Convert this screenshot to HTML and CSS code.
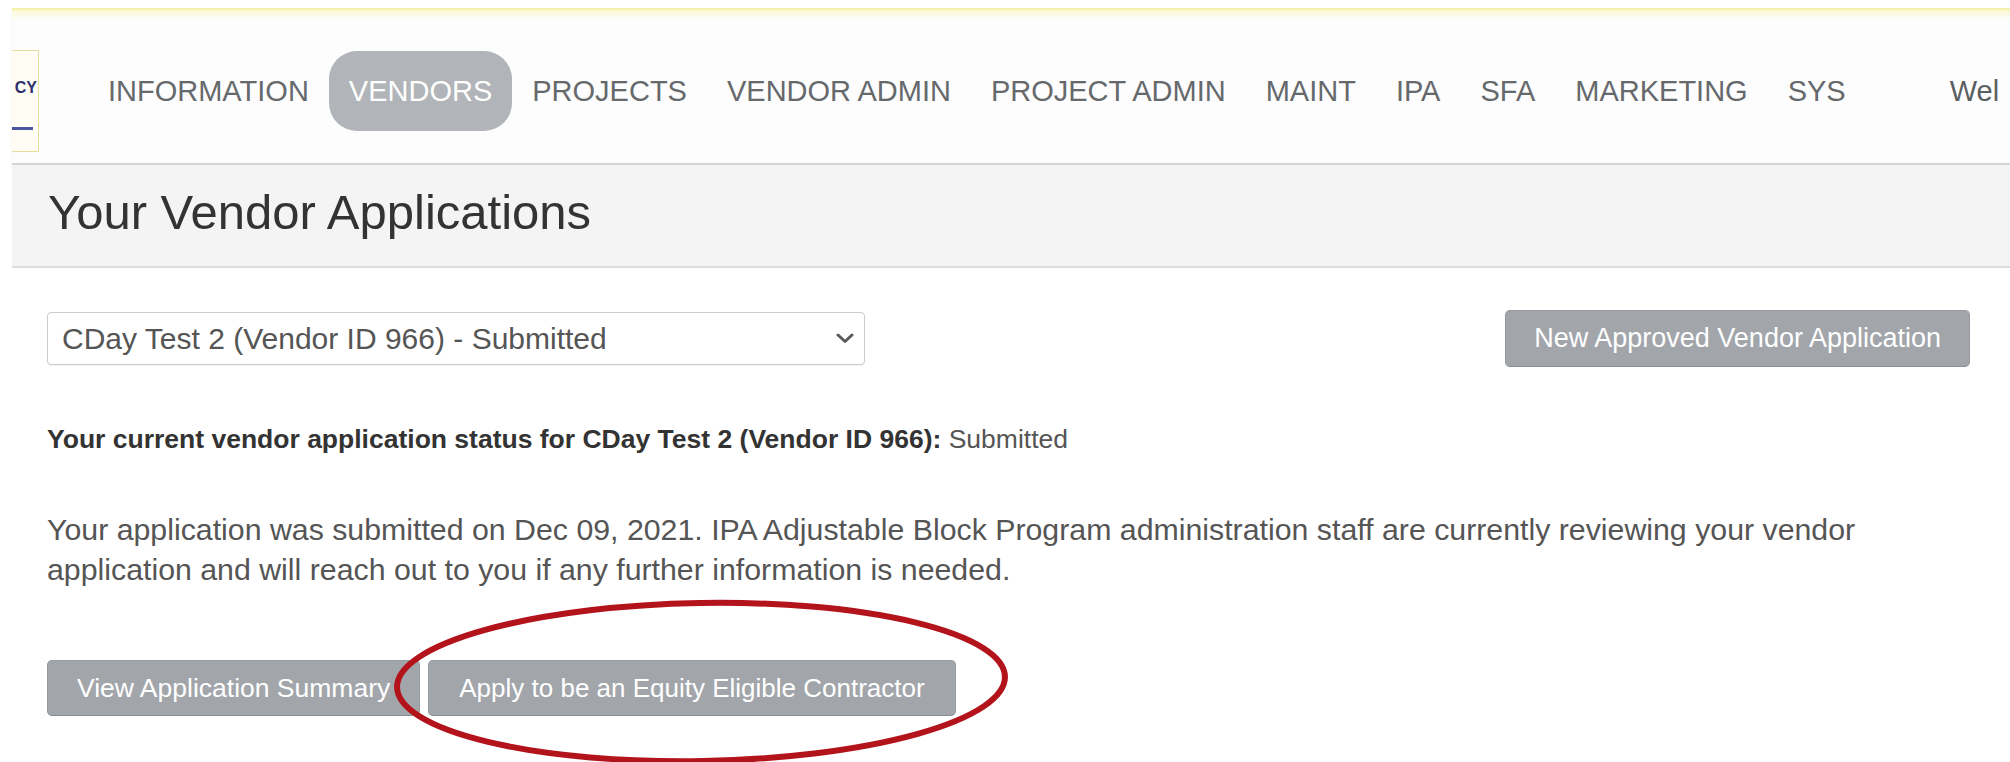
FILE: index.html
```html
<!DOCTYPE html>
<html lang="en">
<head>
<meta charset="utf-8">
<title>Your Vendor Applications</title>
<link rel="stylesheet" href="styles.css">
</head>
<body>
<div class="page">
  <div class="utility"></div>
  <header class="site-header">
    <div class="logo">
      <span class="logo-word">CY</span>
      <span class="logo-rule"></span>
    </div>
    <nav class="main-nav">
      <a class="nav-item">INFORMATION</a>
      <a class="nav-item is-active">VENDORS</a>
      <a class="nav-item">PROJECTS</a>
      <a class="nav-item">VENDOR ADMIN</a>
      <a class="nav-item">PROJECT ADMIN</a>
      <a class="nav-item">MAINT</a>
      <a class="nav-item">IPA</a>
      <a class="nav-item">SFA</a>
      <a class="nav-item">MARKETING</a>
      <a class="nav-item">SYS</a>
    </nav>
    <div class="welcome">Wel</div>
  </header>

  <div class="title-band">
    <h1 class="page-title">Your Vendor Applications</h1>
  </div>

  <main class="content">
    <div class="picker-row">
      <div class="select">
        <span class="select-value">CDay Test 2 (Vendor ID 966) - Submitted</span>
        <svg class="select-chevron" width="18" height="11" viewBox="0 0 18 11" aria-hidden="true">
          <path d="M2 2 L9 8.5 L16 2" fill="none" stroke="#5a5a5a" stroke-width="3" stroke-linecap="round" stroke-linejoin="round"/>
        </svg>
      </div>
      <button class="btn btn-new">New Approved Vendor Application</button>
    </div>

    <p class="status"><strong>Your current vendor application status for CDay Test 2 (Vendor ID 966):</strong> Submitted</p>

    <p class="notice">Your application was submitted on Dec 09, 2021. IPA Adjustable Block Program administration staff are currently reviewing your vendor application and will reach out to you if any further information is needed.</p>

    <div class="actions">
      <button class="btn">View Application Summary</button>
      <button class="btn btn-equity">Apply to be an Equity Eligible Contractor</button>
      <svg class="callout" width="624" height="172" viewBox="0 0 624 172" aria-hidden="true">
        <ellipse cx="312" cy="86" rx="304" ry="79" fill="none" stroke="#b3131b" stroke-width="6" transform="rotate(-1 312 86)"/>
      </svg>
    </div>
  </main>
</div>
</body>
</html>
```

FILE: styles.css
```css
html, body {
  margin: 0;
  padding: 0;
  background: #ffffff;
}

body {
  width: 2010px;
  height: 762px;
  overflow: hidden;
  font-family: "Liberation Sans", Arial, sans-serif;
  color: #555555;
}

.page {
  margin-left: 12px;
}

/* white strip above the header's yellow rule */
.utility {
  height: 8px;
}

.site-header {
  display: flex;
  align-items: flex-start;
  height: 113px;
  padding-top: 42px;
  background: linear-gradient(#f3ee9a 0, #fbf9d8 3px, #fdfdfd 12px, #fdfdfd 100%);
  border-bottom: 2px solid #d4d4d4;
  box-shadow: 0 2px 2px rgba(0, 0, 0, 0.08);
  white-space: nowrap;
}

.logo {
  width: 26px;
  height: 100px;
  border: 1px solid #e7dd9c;
  border-left: none;
  background: #fffdf4;
  display: flex;
  flex-direction: column;
  align-items: flex-end;
  overflow: hidden;
  flex-shrink: 0;
}

.logo-word {
  margin-top: 28px;
  padding-right: 1px;
  font-size: 16px;
  font-weight: bold;
  color: #2d3070;
}

.logo-rule {
  margin-top: 30px;
  align-self: flex-start;
  width: 21px;
  height: 3px;
  background: #4b56a3;
}

.main-nav {
  display: flex;
  margin-left: 49px;
  margin-top: 1px;
}

.nav-item {
  display: block;
  height: 80px;
  line-height: 80px;
  padding: 0 20px;
  font-size: 29px;
  color: #66696c;
  border-radius: 28px;
}

.nav-item.is-active {
  background: #b1b4b8;
  color: #ffffff;
}

.welcome {
  margin-left: 84px;
  margin-top: 1px;
  line-height: 80px;
  font-size: 29px;
  color: #5c5f62;
}

.title-band {
  height: 101px;
  background: #f4f4f4;
  border-bottom: 2px solid #dddddd;
  display: flex;
  align-items: center;
  padding-left: 36px;
}

.page-title {
  margin: 0 0 8px;
  font-size: 49px;
  font-weight: normal;
  color: #333333;
}

.content {
  padding: 42px 40px 0 35px;
}

.picker-row {
  display: flex;
  align-items: center;
  justify-content: space-between;
  height: 57px;
}

.select {
  box-sizing: border-box;
  width: 818px;
  height: 53px;
  border: 1px solid #cccccc;
  border-radius: 4px;
  box-shadow: 0 1px 1px rgba(0, 0, 0, 0.06);
  display: flex;
  align-items: center;
  justify-content: space-between;
  padding: 0 10px 0 14px;
  background: #ffffff;
}

.select-value {
  font-size: 30px;
  color: #555555;
}

.btn {
  box-sizing: border-box;
  height: 57px;
  padding: 0 29px;
  border: 1px solid #959a9f;
  border-bottom-color: #8a8f94;
  border-radius: 5px;
  background: #a2a6ab;
  color: #ffffff;
  font-family: "Liberation Sans", Arial, sans-serif;
  font-size: 26.5px;
}

.btn-new {
  font-size: 27px;
  padding: 0 28px;
}

.btn-equity {
  font-size: 26px;
  padding: 0 30px;
}

.status {
  margin: 54px 0 0;
  font-size: 26.5px;
  line-height: 36px;
  color: #555555;
}

.status strong {
  color: #333333;
}

.notice {
  margin: 53px 0 0;
  font-size: 30.3px;
  line-height: 40px;
  color: #555555;
}

.actions {
  position: relative;
  display: flex;
  gap: 8px;
  margin-top: 70px;
}

.actions .btn {
  height: 56px;
}

/* red hand-drawn style callout around the equity button */
.callout {
  position: absolute;
  left: 342px;
  top: -64px;
}
```
